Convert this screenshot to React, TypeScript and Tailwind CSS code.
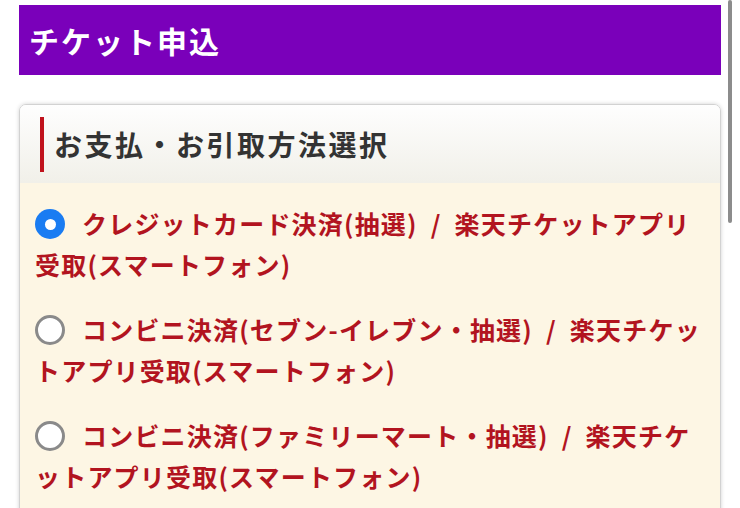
import type { ReactNode } from 'react'

const options = [
  { pay: 'クレジットカード決済(抽選)', receive: '楽天チケットアプリ受取(スマートフォン)', checked: true },
  { pay: 'コンビニ決済(セブン-イレブン・抽選)', receive: '楽天チケットアプリ受取(スマートフォン)', checked: false },
  { pay: 'コンビニ決済(ファミリーマート・抽選)', receive: '楽天チケットアプリ受取(スマートフォン)', checked: false },
]

function Radio({ checked }: { checked: boolean }) {
  return checked ? (
    <span className="relative top-[-3px] mr-[17px] inline-flex size-[30px] items-center justify-center rounded-full bg-[#1a7cf2] align-middle">
      <span className="size-[11px] rounded-full bg-white" />
    </span>
  ) : (
    <span className="relative top-[-3px] mr-[17px] inline-block size-[30px] rounded-full border-[3px] border-[#8a8a8a] bg-white align-middle" />
  )
}

function Option({ checked, children }: { checked: boolean; children: ReactNode }) {
  return (
    <label className="mb-[24px] block text-[25px] leading-[41px] font-bold tracking-[1.2px] text-[#b2141f]">
      <Radio checked={checked} />
      {children}
    </label>
  )
}

export default function App() {
  return (
    <div
      className="relative h-[508px] overflow-hidden bg-white px-[19px] pt-[5px]"
      style={{ fontFamily: '"Noto Sans CJK JP", "Noto Sans", sans-serif' }}
    >
      <div className="flex h-[70px] items-center bg-[#7a00ba] px-[10px]">
        <h1 className="text-[30px] font-bold tracking-[2px] text-white">チケット申込</h1>
      </div>

      <div className="mt-[29px] overflow-hidden rounded-t-[7px] border border-[#d2d2d2] shadow-[0_0_4px_rgba(0,0,0,0.18)]">
        <div className="flex h-[78px] items-center bg-gradient-to-b from-[#fefefe] to-[#f1f0e9] pl-[20px]">
          <div className="mr-[10px] h-[55px] w-[4px] bg-[#c0121c]" />
          <h2 className="text-[28px] font-bold tracking-[2.5px] text-[#333]">お支払・お引取方法選択</h2>
        </div>
        <div className="bg-[#fdf6e4] px-[15px] pt-[20px] pr-[14px] pb-[60px]">
          {options.map((o) => (
            <Option key={o.pay} checked={o.checked}>
              {o.pay}
              <span className="mx-[13px]">/</span>
              {o.receive}
            </Option>
          ))}
        </div>
      </div>

      <div className="absolute top-0 right-[8px] h-[223px] w-[4px] rounded-full bg-[#8c8c8c]" />
    </div>
  )
}
